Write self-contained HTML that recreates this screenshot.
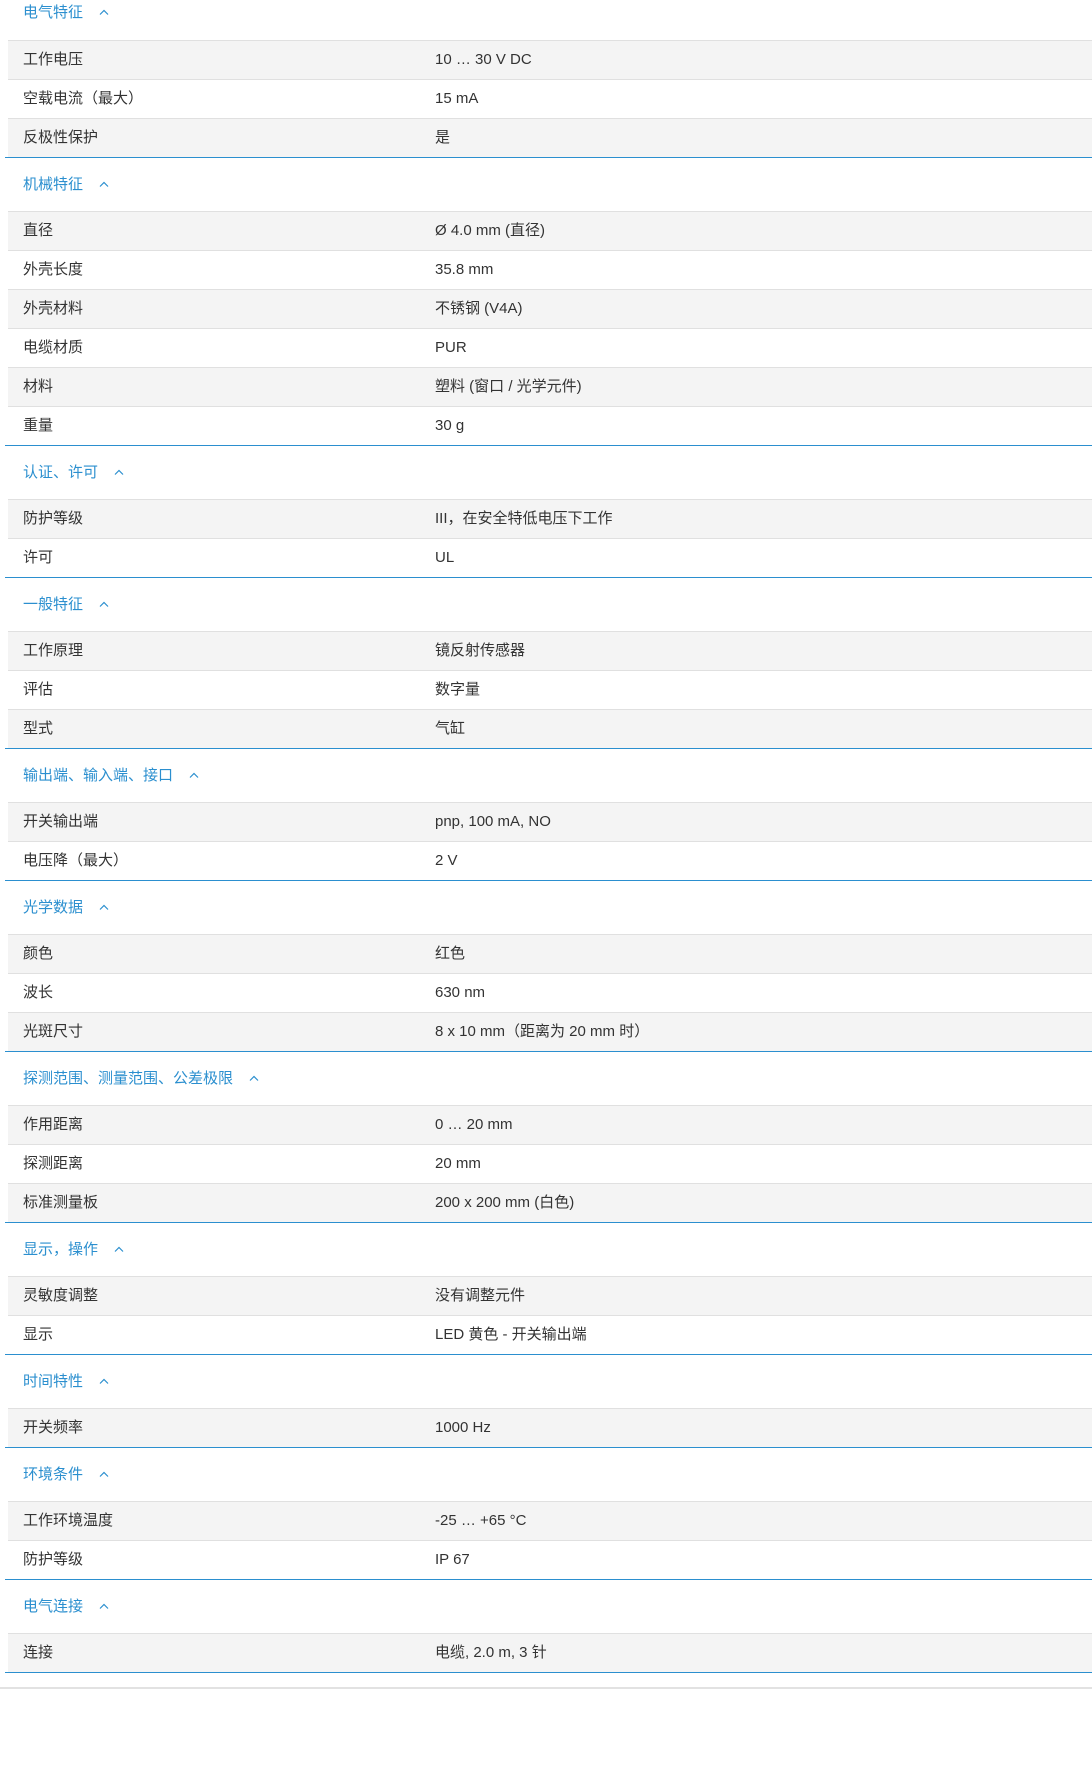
<!DOCTYPE html>
<html><head><meta charset="utf-8"><style>
body{margin:0;width:1092px;height:1768px;background:#fff;font-family:"Liberation Sans","Noto Sans CJK SC",sans-serif;font-size:15px;color:#333;overflow:hidden}
.wrap{position:relative}
.h{height:53px;line-height:53px;padding-left:23px;color:#2b8fcf;position:relative}
.h.first{height:40px;line-height:26px}
.h svg{display:inline-block;vertical-align:middle;margin-left:16px;margin-top:-3px}
.r{margin-left:8px;height:38px;line-height:38px;border-top:1px solid #e0e0e0;position:relative;padding-left:15px}
.r .v{position:absolute;left:427px;top:0}
.bl{margin-left:5px;height:1px;background:#2b8fcf;position:relative}
.g{height:14px}
.gl{height:2px;background:#e2e2e2}
</style></head><body><div class="wrap">
<div class="h first">电气特征<svg width="10" height="6" viewBox="0 0 10 6"><path d="M1 5.5L5 1.5L9 5.5" fill="none" stroke="#2b8fcf" stroke-width="1.2"/></svg></div>
<section>
<div class="r" style="background:#f4f4f4">工作电压<span class="v">10 … 30 V DC</span></div>
<div class="r" style="background:#fff">空载电流（最大）<span class="v">15 mA</span></div>
<div class="r" style="background:#f4f4f4">反极性保护<span class="v">是</span></div>
</section><div class="bl"></div>

<div class="h">机械特征<svg width="10" height="6" viewBox="0 0 10 6"><path d="M1 5.5L5 1.5L9 5.5" fill="none" stroke="#2b8fcf" stroke-width="1.2"/></svg></div>
<section>
<div class="r" style="background:#f4f4f4">直径<span class="v">Ø 4.0 mm (直径)</span></div>
<div class="r" style="background:#fff">外壳长度<span class="v">35.8 mm</span></div>
<div class="r" style="background:#f4f4f4">外壳材料<span class="v">不锈钢 (V4A)</span></div>
<div class="r" style="background:#fff">电缆材质<span class="v">PUR</span></div>
<div class="r" style="background:#f4f4f4">材料<span class="v">塑料 (窗口 / 光学元件)</span></div>
<div class="r" style="background:#fff">重量<span class="v">30 g</span></div>
</section><div class="bl"></div>

<div class="h">认证、许可<svg width="10" height="6" viewBox="0 0 10 6"><path d="M1 5.5L5 1.5L9 5.5" fill="none" stroke="#2b8fcf" stroke-width="1.2"/></svg></div>
<section>
<div class="r" style="background:#f4f4f4">防护等级<span class="v">III，在安全特低电压下工作</span></div>
<div class="r" style="background:#fff">许可<span class="v">UL</span></div>
</section><div class="bl"></div>

<div class="h">一般特征<svg width="10" height="6" viewBox="0 0 10 6"><path d="M1 5.5L5 1.5L9 5.5" fill="none" stroke="#2b8fcf" stroke-width="1.2"/></svg></div>
<section>
<div class="r" style="background:#f4f4f4">工作原理<span class="v">镜反射传感器</span></div>
<div class="r" style="background:#fff">评估<span class="v">数字量</span></div>
<div class="r" style="background:#f4f4f4">型式<span class="v">气缸</span></div>
</section><div class="bl"></div>

<div class="h">输出端、输入端、接口<svg width="10" height="6" viewBox="0 0 10 6"><path d="M1 5.5L5 1.5L9 5.5" fill="none" stroke="#2b8fcf" stroke-width="1.2"/></svg></div>
<section>
<div class="r" style="background:#f4f4f4">开关输出端<span class="v">pnp, 100 mA, NO</span></div>
<div class="r" style="background:#fff">电压降（最大）<span class="v">2 V</span></div>
</section><div class="bl"></div>

<div class="h">光学数据<svg width="10" height="6" viewBox="0 0 10 6"><path d="M1 5.5L5 1.5L9 5.5" fill="none" stroke="#2b8fcf" stroke-width="1.2"/></svg></div>
<section>
<div class="r" style="background:#f4f4f4">颜色<span class="v">红色</span></div>
<div class="r" style="background:#fff">波长<span class="v">630 nm</span></div>
<div class="r" style="background:#f4f4f4">光斑尺寸<span class="v">8 x 10 mm（距离为 20 mm 时）</span></div>
</section><div class="bl"></div>

<div class="h">探测范围、测量范围、公差极限<svg width="10" height="6" viewBox="0 0 10 6"><path d="M1 5.5L5 1.5L9 5.5" fill="none" stroke="#2b8fcf" stroke-width="1.2"/></svg></div>
<section>
<div class="r" style="background:#f4f4f4">作用距离<span class="v">0 … 20 mm</span></div>
<div class="r" style="background:#fff">探测距离<span class="v">20 mm</span></div>
<div class="r" style="background:#f4f4f4">标准测量板<span class="v">200 x 200 mm (白色)</span></div>
</section><div class="bl"></div>

<div class="h">显示，操作<svg width="10" height="6" viewBox="0 0 10 6"><path d="M1 5.5L5 1.5L9 5.5" fill="none" stroke="#2b8fcf" stroke-width="1.2"/></svg></div>
<section>
<div class="r" style="background:#f4f4f4">灵敏度调整<span class="v">没有调整元件</span></div>
<div class="r" style="background:#fff">显示<span class="v">LED 黄色 - 开关输出端</span></div>
</section><div class="bl"></div>

<div class="h">时间特性<svg width="10" height="6" viewBox="0 0 10 6"><path d="M1 5.5L5 1.5L9 5.5" fill="none" stroke="#2b8fcf" stroke-width="1.2"/></svg></div>
<section>
<div class="r" style="background:#f4f4f4">开关频率<span class="v">1000 Hz</span></div>
</section><div class="bl"></div>

<div class="h">环境条件<svg width="10" height="6" viewBox="0 0 10 6"><path d="M1 5.5L5 1.5L9 5.5" fill="none" stroke="#2b8fcf" stroke-width="1.2"/></svg></div>
<section>
<div class="r" style="background:#f4f4f4">工作环境温度<span class="v">-25 … +65 °C</span></div>
<div class="r" style="background:#fff">防护等级<span class="v">IP 67</span></div>
</section><div class="bl"></div>

<div class="h">电气连接<svg width="10" height="6" viewBox="0 0 10 6"><path d="M1 5.5L5 1.5L9 5.5" fill="none" stroke="#2b8fcf" stroke-width="1.2"/></svg></div>
<section>
<div class="r" style="background:#f4f4f4">连接<span class="v">电缆, 2.0 m, 3 针</span></div>
</section><div class="bl"></div>
<div class="g"></div><div class="gl"></div>
</div></body></html>
